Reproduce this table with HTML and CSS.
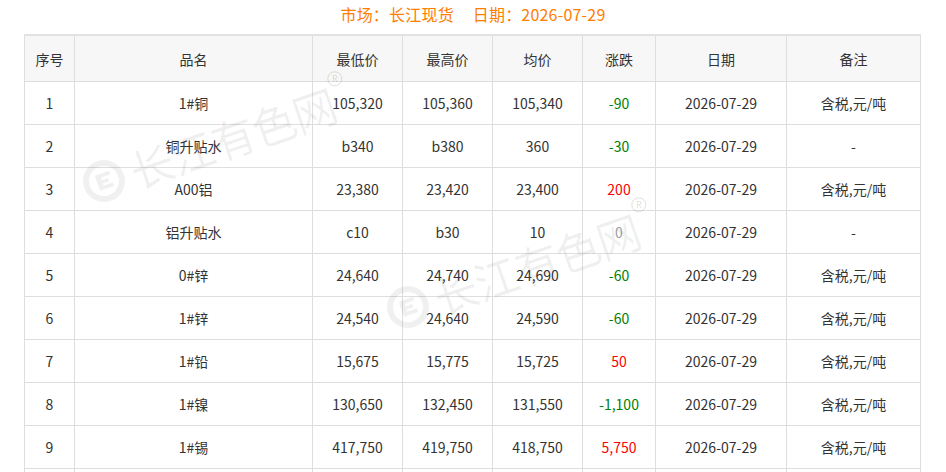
FILE: index.html
```html
<!DOCTYPE html>
<html lang="zh-CN">
<head>
<meta charset="utf-8">
<title>长江现货</title>
<link rel="stylesheet" href="styles.css">
</head>
<body>
<div class="page">
  <div class="title">市场：长江现货&nbsp;&nbsp;&nbsp;&nbsp;&nbsp;日期：2026-07-29</div>
  <table class="price-table">
    <colgroup>
      <col class="c-no"><col class="c-name"><col class="c-low"><col class="c-high"><col class="c-avg"><col class="c-chg"><col class="c-date"><col class="c-note">
    </colgroup>
    <thead>
      <tr><th>序号</th><th>品名</th><th>最低价</th><th>最高价</th><th>均价</th><th>涨跌</th><th>日期</th><th>备注</th></tr>
    </thead>
    <tbody>
      <tr><td>1</td><td>1#铜</td><td>105,320</td><td>105,360</td><td>105,340</td><td class="down">-90</td><td>2026-07-29</td><td>含税,元/吨</td></tr>
      <tr><td>2</td><td>铜升贴水</td><td>b340</td><td>b380</td><td>360</td><td class="down">-30</td><td>2026-07-29</td><td>-</td></tr>
      <tr><td>3</td><td>A00铝</td><td>23,380</td><td>23,420</td><td>23,400</td><td class="up">200</td><td>2026-07-29</td><td>含税,元/吨</td></tr>
      <tr><td>4</td><td>铝升贴水</td><td>c10</td><td>b30</td><td>10</td><td class="flat">0</td><td>2026-07-29</td><td>-</td></tr>
      <tr><td>5</td><td>0#锌</td><td>24,640</td><td>24,740</td><td>24,690</td><td class="down">-60</td><td>2026-07-29</td><td>含税,元/吨</td></tr>
      <tr><td>6</td><td>1#锌</td><td>24,540</td><td>24,640</td><td>24,590</td><td class="down">-60</td><td>2026-07-29</td><td>含税,元/吨</td></tr>
      <tr><td>7</td><td>1#铅</td><td>15,675</td><td>15,775</td><td>15,725</td><td class="up">50</td><td>2026-07-29</td><td>含税,元/吨</td></tr>
      <tr><td>8</td><td>1#镍</td><td>130,650</td><td>132,450</td><td>131,550</td><td class="down">-1,100</td><td>2026-07-29</td><td>含税,元/吨</td></tr>
      <tr><td>9</td><td>1#锡</td><td>417,750</td><td>419,750</td><td>418,750</td><td class="up">5,750</td><td>2026-07-29</td><td>含税,元/吨</td></tr>
      <tr><td></td><td></td><td></td><td></td><td></td><td></td><td></td><td></td></tr>
    </tbody>
  </table>

  <div class="watermark wm-1">
    <svg class="wm-logo" width="44" height="44" viewBox="0 0 44 44">
      <circle cx="22" cy="22" r="18" fill="none" stroke="currentColor" stroke-width="6"/>
      <path d="M15 14 H30 V18 H20 V20.5 H27 V24 H20 V26 H30 V30 H15 Z" fill="currentColor"/>
    </svg>
    <span class="wm-text">长江有色网</span>
    <span class="wm-reg">R</span>
  </div>
  <div class="watermark wm-2">
    <svg class="wm-logo" width="44" height="44" viewBox="0 0 44 44">
      <circle cx="22" cy="22" r="18" fill="none" stroke="currentColor" stroke-width="6"/>
      <path d="M15 14 H30 V18 H20 V20.5 H27 V24 H20 V26 H30 V30 H15 Z" fill="currentColor"/>
    </svg>
    <span class="wm-text">长江有色网</span>
    <span class="wm-reg">R</span>
  </div>
</div>
</body>
</html>
```
FILE: styles.css
```css
html, body {
  margin: 0;
  padding: 0;
  background: #fff;
}
body {
  font-family: "Noto Sans CJK SC", "Noto Sans", "Liberation Sans", sans-serif;
  color: #333;
  font-size: 14px;
}
.page {
  position: relative;
  width: 946px;
  height: 472px;
  overflow: hidden;
}
.title {
  height: 34px;
  line-height: 28px;
  text-align: center;
  font-size: 16px;
  letter-spacing: 0.2px;
  color: #ff7d00;
}
.price-table {
  margin-left: 24px;
  width: 896px;
  border-collapse: collapse;
  table-layout: fixed;
  border-top: 2px solid #e2e2e2;
}
.c-no { width: 50px; }
.c-name { width: 238px; }
.c-low { width: 90px; }
.c-high { width: 90px; }
.c-avg { width: 90px; }
.c-chg { width: 73px; }
.c-date { width: 131px; }
.c-note { width: 134px; }
.price-table th,
.price-table td {
  border: 1px solid #dedede;
  text-align: center;
  padding: 0;
  font-weight: normal;
  white-space: nowrap;
}
.price-table th {
  height: 45px;
  background: #f7f7f7;
  color: #333;
}
.price-table td {
  height: 42px;
}
.price-table td.down { color: #008000; }
.price-table td.up { color: #ff0000; }
.price-table td.flat { color: #a0a0a0; }

.watermark {
  position: absolute;
  display: flex;
  align-items: center;
  height: 50px;
  color: rgba(0, 0, 0, 0.06);
  transform: rotate(-19deg);
  transform-origin: 22px 25px;
  pointer-events: none;
}
.wm-1 { left: 82px; top: 156px; }
.wm-2 { left: 386px; top: 282px; }
.wm-logo { flex: none; }
.wm-text {
  margin-left: 6px;
  font-size: 44px;
  line-height: 50px;
  letter-spacing: -1px;
  font-weight: 400;
  -webkit-text-stroke: 1px rgba(0, 0, 0, 0.03);
}
.wm-reg {
  flex: none;
  align-self: flex-start;
  margin-top: -4px;
  margin-left: 1px;
  width: 13px;
  height: 13px;
  border: 1.5px solid rgba(0, 0, 0, 0.12);
  border-radius: 50%;
  display: flex;
  align-items: center;
  justify-content: center;
  font-size: 9px;
  line-height: 1;
  color: rgba(0, 0, 0, 0.14);
  transform: rotate(19deg);
}
```
